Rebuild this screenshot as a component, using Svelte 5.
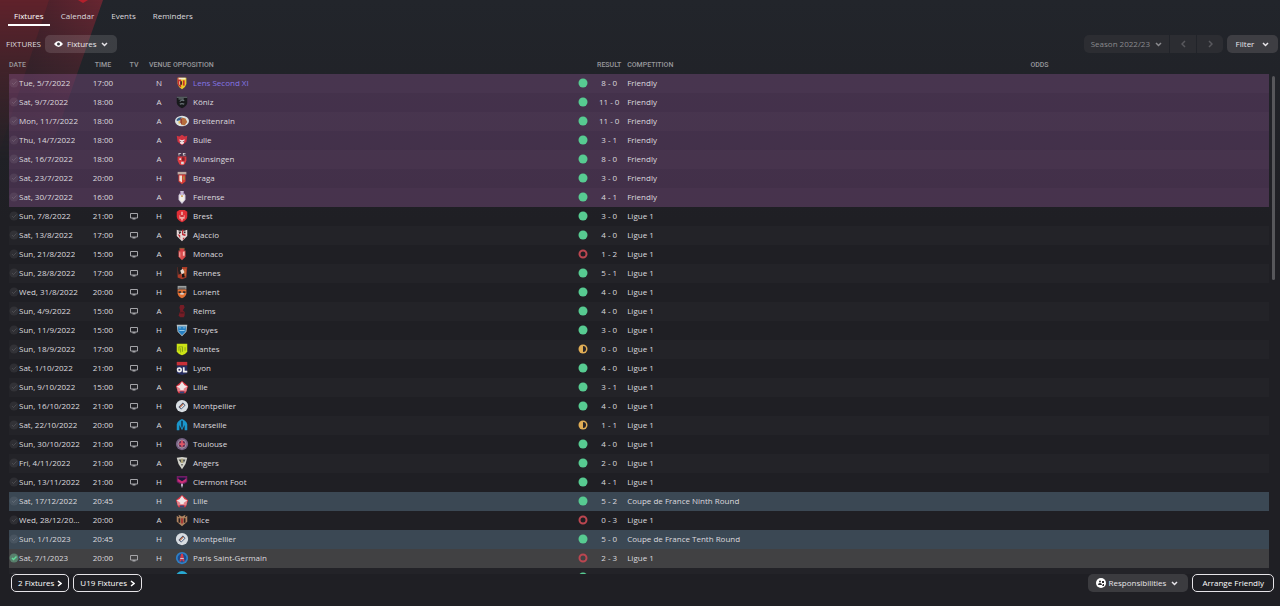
<script>
    const tabs = ['Fixtures', 'Calendar', 'Events', 'Reminders'];
    let activeTab = 'Fixtures';

    // date, time, on tv, venue, opposition, outcome, result, competition
    const fixtures = [
        ['Tue, 5/7/2022', '17:00', 0, 'N', 'Lens Second XI', 'w', '8 - 0', 'Friendly'],
        ['Sat, 9/7/2022', '18:00', 0, 'A', 'Köniz', 'w', '11 - 0', 'Friendly'],
        ['Mon, 11/7/2022', '18:00', 0, 'A', 'Breitenrain', 'w', '11 - 0', 'Friendly'],
        ['Thu, 14/7/2022', '18:00', 0, 'A', 'Bulle', 'w', '3 - 1', 'Friendly'],
        ['Sat, 16/7/2022', '18:00', 0, 'A', 'Münsingen', 'w', '8 - 0', 'Friendly'],
        ['Sat, 23/7/2022', '20:00', 0, 'H', 'Braga', 'w', '3 - 0', 'Friendly'],
        ['Sat, 30/7/2022', '16:00', 0, 'A', 'Feirense', 'w', '4 - 1', 'Friendly'],
        ['Sun, 7/8/2022', '21:00', 1, 'H', 'Brest', 'w', '3 - 0', 'Ligue 1'],
        ['Sat, 13/8/2022', '17:00', 1, 'A', 'Ajaccio', 'w', '4 - 0', 'Ligue 1'],
        ['Sun, 21/8/2022', '15:00', 1, 'A', 'Monaco', 'l', '1 - 2', 'Ligue 1'],
        ['Sun, 28/8/2022', '17:00', 1, 'H', 'Rennes', 'w', '5 - 1', 'Ligue 1'],
        ['Wed, 31/8/2022', '20:00', 1, 'H', 'Lorient', 'w', '4 - 0', 'Ligue 1'],
        ['Sun, 4/9/2022', '15:00', 1, 'A', 'Reims', 'w', '4 - 0', 'Ligue 1'],
        ['Sun, 11/9/2022', '15:00', 1, 'H', 'Troyes', 'w', '3 - 0', 'Ligue 1'],
        ['Sun, 18/9/2022', '17:00', 1, 'A', 'Nantes', 'd', '0 - 0', 'Ligue 1'],
        ['Sat, 1/10/2022', '21:00', 1, 'H', 'Lyon', 'w', '4 - 0', 'Ligue 1'],
        ['Sun, 9/10/2022', '15:00', 1, 'A', 'Lille', 'w', '3 - 1', 'Ligue 1'],
        ['Sun, 16/10/2022', '21:00', 1, 'H', 'Montpellier', 'w', '4 - 0', 'Ligue 1'],
        ['Sat, 22/10/2022', '20:00', 1, 'A', 'Marseille', 'd', '1 - 1', 'Ligue 1'],
        ['Sun, 30/10/2022', '21:00', 1, 'H', 'Toulouse', 'w', '4 - 0', 'Ligue 1'],
        ['Fri, 4/11/2022', '21:00', 1, 'A', 'Angers', 'w', '2 - 0', 'Ligue 1'],
        ['Sun, 13/11/2022', '21:00', 1, 'H', 'Clermont Foot', 'w', '4 - 1', 'Ligue 1'],
        ['Sat, 17/12/2022', '20:45', 0, 'H', 'Lille', 'w', '5 - 2', 'Coupe de France Ninth Round'],
        ['Wed, 28/12/2022', '20:00', 0, 'A', 'Nice', 'l', '0 - 3', 'Ligue 1'],
        ['Sun, 1/1/2023', '20:45', 0, 'H', 'Montpellier', 'w', '5 - 0', 'Coupe de France Tenth Round'],
        ['Sat, 7/1/2023', '20:00', 1, 'H', 'Paris Saint-Germain', 'l', '2 - 3', 'Ligue 1'],
        ['Wed, 11/1/2023', '21:00', 0, 'A', 'Strasbourg', 'w', '2 - 0', 'Ligue 1']
    ];

    const shield = 'M3 2h10v7q-1 4-5 6q-4-2-5-6z';
    const disc = 'M8 1a7 7 0 1 1 0 14a7 7 0 1 1 0-14z';

    // club crests as [fill, path] layers on a 16x16 grid
    const crests = {
        'Lens Second XI': [['#e9c928', shield], ['#c9302c', 'M3 2h4v11q-3-1-4-4z'], ['#c9302c', 'M9 5h2v6h-2z'], ['#f4ecd0', 'M4 2h8v2h-8zM5 6h1v4h-1z'], ['#4a2820', 'M6 6h2v4h-2z']],
        'Köniz': [['#17191b', 'M2 2h12v7q-1 4-6 6q-5-2-6-6z'], ['#687276', 'M2 2h12v1h-12zM5 7q3-3 6-1l-1 1q-3-1-4 1zM5 10q3-2 6 0l-1 1q-2-1-4 0z'], ['#8b9698', 'M4 4h6v1h-6z']],
        'Breitenrain': [['#dbe2e2', 'M8 2a8 6 0 1 1 0 12a8 6 0 1 1 0-12z'], ['#38618a', 'M2 6q3-3 6-2l-2 3-4 1z'], ['#b56d3d', 'M8 4l4 1 2 4-3 4-4-1z'], ['#e7c15f', 'M4 8h2v3h-2z'], ['#9b4031', 'M6 5h2v7l-2-2z']],
        'Bulle': [['#cf3442', 'M2 3l3 1 3-2 3 2 3-1-1 7-5 4-5-4z'], ['#f1dedf', 'M5 7l2 1h2l2-1-1 5-2 1-2-1z'], ['#4a2028', 'M6 9h1v1h-1zM9 9h1v1h-1z']],
        'Münsingen': [['#df3c41', 'M3 5h10v5l-2 4q-3 2-6 0l-2-4z'], ['#dedada', 'M4 1h3v1h-2v2h-1zM9 1h3v1h-2v1h2v1h-3zM5 7h2v2h-2zM7 11h3v3h-3z'], ['#81232b', 'M8 6h3v4h-3z']],
        'Braga': [['#bdaaa2', 'M3 1h10v3h-10z'], ['#d73e37', 'M4 4h8v8l-4 3-4-3z'], ['#f3dfd9', 'M5 5h3v8l-3-2z'], ['#ab8c46', 'M9 6h2v4h-2z']],
        'Feirense': [['#c9c2d5', 'M6 1h4v2l2 3v5l-4 5-4-5v-5l2-3z'], ['#f1eee7', 'M5 6h6v5l-3 3-3-3z'], ['#9b70ad', 'M6 2h1v3h-1zM9 2h1v3h-1z'], ['#d1a257', 'M7 6h2v2h-2z']],
        'Brest': [['#e02e36', 'M2 3l3-2h6l3 2v6q-1 4-6 6q-5-2-6-6z'], ['#f0a7a4', 'M7 3h2v4h2v4h-2v2h-2v-2h-2v-4h2z'], ['#c91f2a', 'M6 7h4v2h-4z']],
        'Ajaccio': [['#e6d8d7', 'M2 2l3 1h6l3-1v7l-6 6-6-6z'], ['#bd3039', 'M3 7l3 1v4zM8 2h2l-1 4 4 2-2 1-3-1zM9 11h2l-2 3z'], ['#3c2c30', 'M4 4h3v1l-2 2zM10 4h2v2h-2z']],
        'Monaco': [['#d84b4c', 'M4 4h8v7l-4 4-4-4z'], ['#f4b9b5', 'M5 6h1v6l-1-1zM9 5h2v5h-2z'], ['#7e5d34', 'M5 1h6v3h-6z'], ['#d93942', 'M6 2h4v3h-4z']],
        'Rennes': [['#aa3c28', 'M3 1h11l-1 12-5 2-5-2z'], ['#242021', 'M3 1h5v7l-4 2z'], ['#e9dbcf', 'M6 5l3-2 2 4-3 3-1-2z'], ['#191517', 'M8 9h3v4h-3z'], ['#db8c3b', 'M11 3h1v8h-1z']],
        'Lorient': [['#9ca0a0', 'M3 1h10v4h-10z'], ['#e17034', 'M3 5h10v5q-1 4-5 5q-4-1-5-5z'], ['#332b2b', 'M4 3h8v1h-8zM4 7h3v2h-3zM9 7h3v2h-3z'], ['#d9d1c9', 'M6 9h4v2h-4z']],
        'Reims': [['#761d26', 'M6 1h4l1 3-2 3 2 2v4l-1 2h-4l-2-2 2-5-1-4z'], ['#4f1a22', 'M6 9h4v2h-4z']],
        'Troyes': [['#b8c5ca', 'M2 2h12l-1 8-5 5-5-5z'], ['#257ec1', 'M3 4h10l-1 6-4 4-4-4z'], ['#93c9e8', 'M4 5h3v1h-3zM9 5h3v1h-3zM5 8h6v1h-6z']],
        'Nantes': [['#cce316', 'M2 2h12v9q-2 3-6 4q-4-1-6-4z'], ['#829c19', 'M4 5h1v5h-1zM6 7h1v5h-1zM8 5h1v6h-1zM11 6h1v4h-1zM5 5h3v1h-3z']],
        'Lyon': [['#262d61', 'M2 5h12v9l-6 2-6-2z'], ['#c83039', 'M2 1h12v4h-12z'], ['#f1f0ee', 'M2 9q0-2 3-2q3 0 3 3q0 3-3 3q-3 0-3-4zM9 7h2v4h3v2h-5z'], ['#262d61', 'M4 9h2v2h-2z']],
        'Lille': [['#df3442', 'M8 1l7 6-3 8h-8l-3-8z'], ['#efe5e7', 'M8 2l3 4 3 1-2 5h-8l-2-5 3-1z'], ['#e5838c', 'M2 7l4 3v3l-3 0zM14 7l-4 3v3l3 0z'], ['#30477b', 'M5 13h6l-1 2h-4z']],
        'Montpellier': [['#d8dde2', disc], ['#30466a', 'M4 9l5-5 3 3-5 5z'], ['#dd7944', 'M5 9l4-4 1 1-4 4z'], ['#e6e8eb', 'M6 10l4-4 1 1-4 4z']],
        'Marseille': [['#1a96cb', 'M2 14v-7q1-4 6-6q5 2 6 6v7h-3v-6l-3 6-3-6v6z'], ['#123e5b', 'M7 3h2v6l-1 3-1-3z']],
        'Toulouse': [['#776284', disc], ['#b4acb7', 'M8 3a5 5 0 1 1 0 10a5 5 0 1 1 0-10z'], ['#6c3459', 'M8 4a4 4 0 1 1 0 8a4 4 0 1 1 0-8z'], ['#e05767', 'M7 4h2v3h2v2h-2v2h-2v-2h-2v-2h2z']],
        'Angers': [['#d3d3cb', 'M2 2l6-1 6 1-2 7-4 6-4-6z'], ['#4d4f4c', 'M4 4h3v4zM9 4h3l-2 4zM7 9h2l-1 3z'], ['#a79d6c', 'M7 3h2v5h-2z']],
        'Clermont Foot': [['#701c66', 'M2 1h12v7l-3 2h-6l-3-2z'], ['#1d183b', 'M4 3h8v4h-8z'], ['#c92e73', 'M3 4l5 3 5-3v3l-5 3-5-3z'], ['#d4c5df', 'M7 10h2v2l-1 3-1-3z']],
        'Nice': [['#ae8460', 'M2 3l3 2-1-3 4 2 4-2-1 3 3-2v7l-6 5-6-5z'], ['#312020', 'M4 6h2v5h-2zM10 6h2v5h-2z'], ['#a83030', 'M7 6h2v6h-2z']],
        'Paris Saint-Germain': [['#2e7fc5', disc], ['#1d4c8e', 'M8 3a5 5 0 1 1 0 10a5 5 0 1 1 0-10z'], ['#d33c4b', 'M7 3h2l2 9h-2l-1-3-1 3h-2z'], ['#ced9eb', 'M6 8h4v1h-4z']],
        'Strasbourg': [['#28a9d2', disc], ['#dbe7ec', 'M5 7h6v3h-6z']]
    };

    function rowKind(competition, i) {
        if (competition === 'Friendly') return 'friendly';
        if (competition.startsWith('Coupe')) return 'cup';
        return i === 25 ? 'current' : 'league';
    }
</script>

<div class="page">
    <svg class="glow" viewBox="0 0 130 160" aria-hidden="true">
        <defs>
            <linearGradient id="fade" x1="0" y1="0" x2="0" y2="1">
                <stop offset="0" stop-color="#fff" />
                <stop offset="0.4" stop-color="#888" />
                <stop offset="1" stop-color="#000" />
            </linearGradient>
            <linearGradient id="band" x1="0" y1="0" x2="1" y2="0">
                <stop offset="0.3" stop-color="#48202a" />
                <stop offset="1" stop-color="#682631" />
            </linearGradient>
            <mask id="fadeMask"><rect width="130" height="160" fill="url(#fade)" /></mask>
        </defs>
        <g mask="url(#fadeMask)">
            <path d="M0 0h103L47 160H0z" fill="url(#band)" />
            <path d="M0 0h49L0 150z" fill="#60222b" />
        </g>
        <path d="M78 0h10l-5 3z" fill="#b3202c" />
    </svg>

    <nav class="tabs">
        {#each tabs as tab}
            <button class="tab" class:active={tab === activeTab} on:click={() => (activeTab = tab)}>{tab}</button>
        {/each}
    </nav>

    <div class="toolbar">
        <h1>FIXTURES</h1>
        <button class="pill view">
            <svg width="9" height="8" viewBox="0 0 9 8"><path d="M0 4q4.500-6 9 0q-4.500 6-9 0z" fill="#fff" /><circle cx="4.500" cy="4" r="1.500" fill="#3a3a40" /></svg>
            Fixtures
            <svg width="7" height="5" viewBox="0 0 7 5"><path d="M1 1l2.500 2.500L6 1" class="stroke" /></svg>
        </button>
        <div class="season">
            <button>Season 2022/23 <svg width="7" height="5" viewBox="0 0 7 5"><path d="M1 1l2.500 2.500L6 1" class="stroke" /></svg></button>
            <button class="step" aria-label="Previous season"><svg width="5" height="8" viewBox="0 0 5 8"><path d="M4 1L1 4L4 7" class="stroke" /></svg></button>
            <button class="step" aria-label="Next season"><svg width="5" height="8" viewBox="0 0 5 8"><path d="M1 1l3 3L1 7" class="stroke" /></svg></button>
        </div>
        <button class="pill filter">
            Filter
            <svg width="7" height="5" viewBox="0 0 7 5"><path d="M1 1l2.500 2.500L6 1" class="stroke" /></svg>
        </button>
    </div>

    <div class="scroller">
        <table>
            <colgroup>
                <col class="c-date"><col class="c-time"><col class="c-tv"><col class="c-venue"><col class="c-opp">
                <col class="c-dot"><col class="c-result"><col class="c-comp"><col>
            </colgroup>
            <thead>
                <tr>
                    <th class="left date-head">DATE</th>
                    <th>TIME</th>
                    <th>TV</th>
                    <th>VENUE</th>
                    <th class="left">OPPOSITION</th>
                    <th></th>
                    <th>RESULT</th>
                    <th class="left comp">COMPETITION</th>
                    <th class="left comp">ODDS</th>
                </tr>
            </thead>
            <tbody>
                {#each fixtures as [date, time, tv, venue, club, outcome, result, competition], i}
                    <tr class={rowKind(competition, i)}>
                        <td>
                            <div class="date">
                                <svg class="tick" width="10" height="10" viewBox="0 0 10 10">
                                    <circle cx="5" cy="5" r="4.500" />
                                    <path d="M3 5l1.500 1.500L7.500 3.500" />
                                </svg>
                                <span>{date}</span>
                            </div>
                        </td>
                        <td class="mid">{time}</td>
                        <td class="mid">
                            {#if tv}
                                <svg width="8" height="8" viewBox="0 0 8 8"><path d="M0.500 1.500h7v4.500h-7z" fill="none" stroke="#a4a4a8" /><path d="M2.500 6h3v1.500h-3z" fill="#a4a4a8" /></svg>
                            {/if}
                        </td>
                        <td class="mid">{venue}</td>
                        <td>
                            <div class="club" class:own={club === 'Lens Second XI'}>
                                <svg width="14" height="14" viewBox="0 0 16 16">
                                    {#each crests[club] as [fill, d]}<path {fill} {d} />{/each}
                                </svg>
                                {club}
                            </div>
                        </td>
                        <td class="mid">
                            <svg width="10" height="10" viewBox="0 0 10 10">
                                {#if outcome === 'w'}
                                    <circle cx="5" cy="5" r="4.500" fill="#57cb91" />
                                {:else if outcome === 'l'}
                                    <circle cx="5" cy="5" r="3.500" fill="none" stroke="#bb4650" stroke-width="2" />
                                {:else}
                                    <circle cx="5" cy="5" r="4.500" fill="#e0ad55" />
                                    <path d="M5 2a3 3 0 0 1 0 6z" fill="#252329" />
                                {/if}
                            </svg>
                        </td>
                        <td class="mid">{result}</td>
                        <td class="comp">{competition}</td>
                        <td></td>
                    </tr>
                {/each}
            </tbody>
        </table>
        <div class="track"><div class="thumb"></div></div>
    </div>

    <footer>
        <button class="outline">2 Fixtures <svg width="5" height="7" viewBox="0 0 5 7"><path d="M1 1l3 2.500L1 6" class="stroke" /></svg></button>
        <button class="outline">U19 Fixtures <svg width="5" height="7" viewBox="0 0 5 7"><path d="M1 1l3 2.500L1 6" class="stroke" /></svg></button>
        <button class="pill resp">
            <svg width="10" height="10" viewBox="0 0 10 10">
                <circle cx="5" cy="5" r="5" fill="#fff" />
                <path d="M2 7q0-2 2-2t2 2zM4 2.500a1 1 0 0 1 0 2a1 1 0 0 1 0-2zM6 3h2v2H6zM7 6h1v2H6z" fill="#2a2a2e" />
            </svg>
            Responsibilities
            <svg class="last" width="7" height="5" viewBox="0 0 7 5"><path d="M1 1l2.500 2.500L6 1" class="stroke" /></svg>
        </button>
        <button class="outline arrange">Arrange Friendly</button>
    </footer>
</div>

<style>
    :global(body) {
        margin: 0;
        background: #1f1f24;
    }

    .page {
        position: relative;
        height: 100vh;
        display: flex;
        flex-direction: column;
        overflow: hidden;
        background: linear-gradient(#22252b, #1f1f24 220px);
        color: #dcdadf;
        font: 8px/10px "Open Sans", "Noto Sans", sans-serif;
    }

    .glow {
        position: absolute;
        left: 0;
        top: 0;
        width: 130px;
        height: 160px;
    }

    button {
        font: inherit;
        color: inherit;
        border: 0;
        padding: 0;
        background: none;
        display: flex;
        align-items: center;
        justify-content: center;
        white-space: nowrap;
    }

    svg {
        flex: none;
    }

    .stroke {
        fill: none;
        stroke: currentColor;
        stroke-width: 1.5;
    }

    .tabs, .toolbar, .scroller, footer {
        position: relative;
        display: flex;
    }

    .tabs {
        padding: 8px 8px 0;
        gap: 5px;
    }

    .tab {
        height: 18px;
        padding: 0 6px;
        border-bottom: 2px solid transparent;
    }

    .tab.active {
        border-color: #fff;
        color: #fff;
    }

    .toolbar {
        align-items: center;
        height: 18px;
        padding: 9px 2px 3px 6px;
        gap: 4px;
    }

    h1 {
        margin: 0;
        font-size: 8px;
        font-weight: 400;
    }

    .pill {
        height: 18px;
        border-radius: 5px;
        background: #ffffff20;
        color: #e8e6ea;
    }

    .view {
        padding: 0 9px;
        gap: 4px;
    }

    .season {
        display: flex;
        gap: 1px;
        margin-left: auto;
        color: #8a8a8e;
        border-radius: 5px;
        overflow: hidden;
    }

    .season button {
        height: 18px;
        background: #2c2d32;
    }

    .season button:first-child {
        padding: 0 7px;
        gap: 5px;
    }

    .season .step {
        width: 26px;
        color: #58585d;
    }

    .filter {
        width: 51px;
        gap: 8px;
        background: #3e3e43;
    }

    .scroller {
        flex: 1;
        min-height: 0;
        overflow: hidden;
        padding-left: 9px;
    }

    table {
        flex: 1;
        width: 100%;
        height: 0;
        table-layout: fixed;
        border-collapse: collapse;
    }

    .c-date { width: 78px; }
    .c-time { width: 32px; }
    .c-tv, .c-result { width: 30px; }
    .c-venue { width: 20px; }
    .c-dot { width: 22px; }
    .c-opp, .c-comp { width: 32%; }

    th {
        height: 18px;
        padding: 0;
        color: #98989c;
        font-family: Roboto, sans-serif;
        font-size: 7px;
        font-weight: 500;
        text-align: center;
        white-space: nowrap;
    }

    th.left {
        padding-left: 4px;
        text-align: left;
    }

    th.date-head {
        padding-left: 0;
    }

    td {
        height: 18px;
        padding: 0 0 1px;
        white-space: nowrap;
    }

    th.comp, td.comp {
        padding-left: 3px;
    }

    td svg {
        display: block;
        margin: 0 auto;
    }

    .mid {
        text-align: center;
    }

    tr.league:nth-child(odd) { background: #ffffff05; }
    tr.friendly { background: rgba(150, 86, 160, 0.3); }
    tr.friendly:nth-child(odd) { background: rgba(154, 92, 162, 0.32); }
    tr.cup { background: #3b4854; }
    tr.current { background: #414143; }

    .date {
        display: flex;
        align-items: center;
        width: 72px;
    }

    .date svg, .club svg {
        margin: 0;
    }

    .date span {
        overflow: hidden;
        text-overflow: ellipsis;
    }

    .tick circle { fill: #ffffff12; }
    .tick path { fill: none; stroke: #ffffff20; }
    .current .tick circle { fill: #58806c; }
    .current .tick path { stroke: #63da9b; stroke-width: 1.5; }

    .club {
        display: flex;
        align-items: center;
        gap: 4px;
        padding-left: 6px;
    }

    .club.own {
        color: #8476e4;
    }

    .track {
        width: 11px;
        padding: 20px 5px 0 3px;
        box-sizing: border-box;
    }

    .thumb {
        height: 41%;
        border-radius: 2px;
        background: #57575b;
    }

    footer {
        align-items: center;
        gap: 4px;
        height: 18px;
        padding: 0 6px 14px 11px;
    }

    .outline {
        height: 18px;
        padding: 0 6px;
        gap: 3px;
        border: 1px solid #e6e4e8;
        border-radius: 5px;
        color: #fff;
    }

    .outline.arrange {
        padding: 0 9px;
    }

    .resp {
        margin-left: auto;
        padding: 0 8px;
        gap: 3px;
    }

    .resp .last {
        margin: 0 2px;
    }
</style>
